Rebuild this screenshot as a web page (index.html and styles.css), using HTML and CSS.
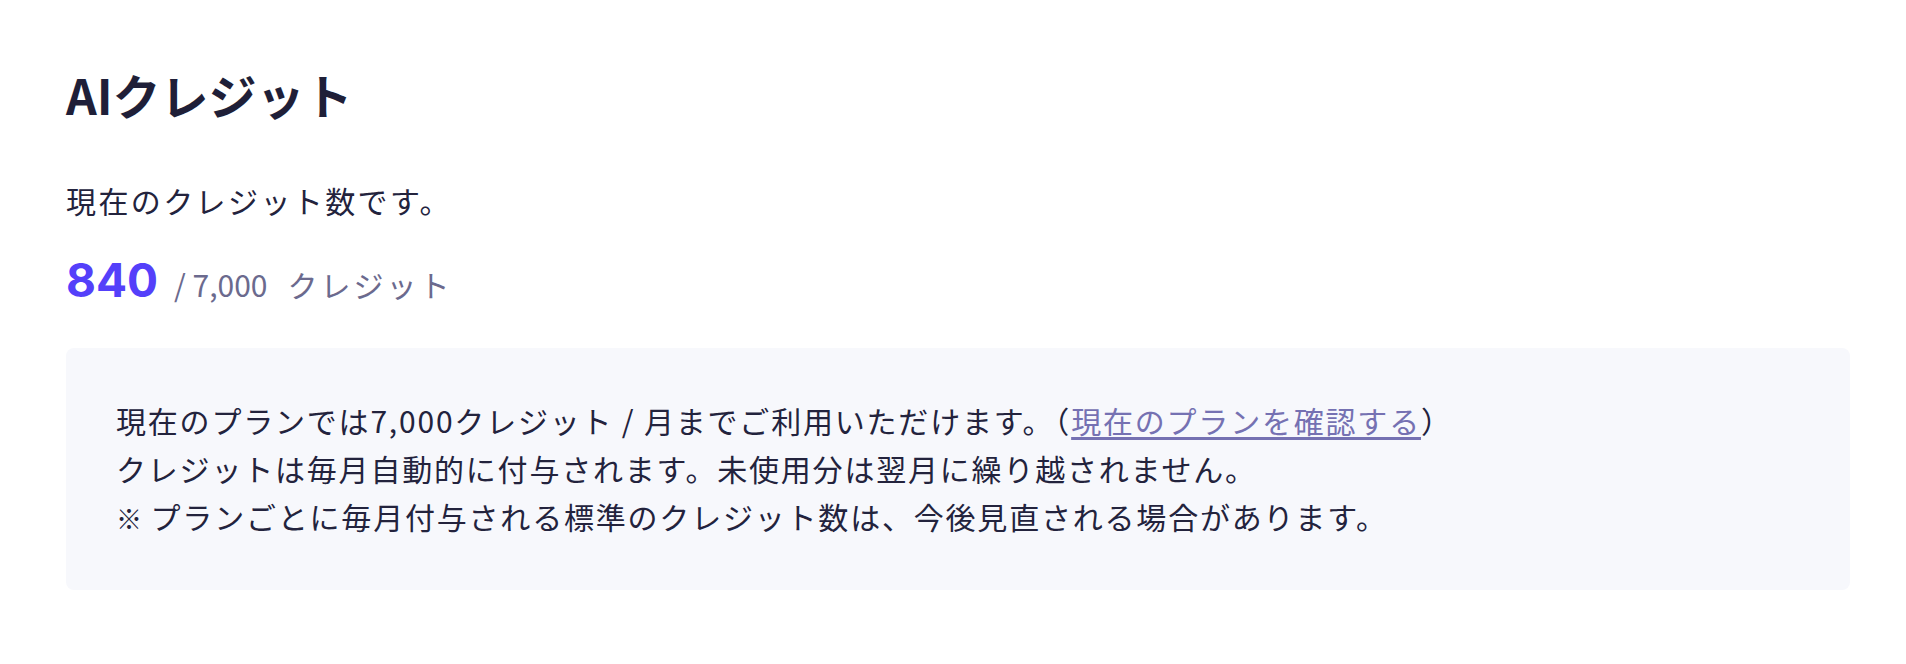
FILE: index.html
```
<html>
    <head>
        <meta charset="utf-8">
        <title>AIクレジット</title>
        <link rel="stylesheet" href="styles.css">
    </head>
    <body>
        <div class="page">
            <h1 class="title">AIクレジット</h1>
            <p class="lead">現在のクレジット数です。</p>
            <div class="credits">
                <span class="credits-now">840</span>
                <span class="credits-max">/ 7,000</span>
                <span class="credits-unit">クレジット</span>
            </div>
            <div class="note">
                現在のプランでは7,000クレジット / 月までご利用いただけます。（<a href="#" class="note-link">現在のプランを確認する</a>）<br>
                クレジットは毎月自動的に付与されます。未使用分は翌月に繰り越されません。<br>
                <b class="mark">※</b> プランごとに毎月付与される標準のクレジット数は、今後見直される場合があります。
            </div>
        </div>
    </body>
</html>
```

FILE: styles.css
```
body {
    margin: 0;
    background: #fff;
    color: #23233d;
    font-family: "Noto Sans CJK JP", "Noto Sans", sans-serif;
}
.page {
    padding: 62px 56px 0 66px;
}
.title {
    margin: 0;
    font-size: 48px;
    line-height: 64px;
    font-weight: 700;
    color: #1f1f38;
}
.lead {
    margin: 52px 0 0;
    font-size: 30px;
    line-height: 44px;
    letter-spacing: 0.08em;
}
.credits {
    display: flex;
    align-items: baseline;
    margin-top: 30px;
    color: #6b6a8e;
    font-size: 30px;
}
.credits-now {
    font-family: "Inter", "Noto Sans", sans-serif;
    font-size: 46px;
    font-weight: 700;
    color: #5440fa;
    margin-right: 16px;
}
.credits-max {
    margin-right: 20px;
}
.credits-unit {
    letter-spacing: 0.1em;
}
.note {
    margin-top: 40px;
    padding: 48px 50px;
    background: #f7f8fc;
    border-radius: 8px;
    font-size: 30px;
    line-height: 48px;
    letter-spacing: 0.06em;
}
.mark {
    font-size: 26px;
    letter-spacing: 0;
}
.note-link {
    color: #7571b2;
    text-decoration: underline;
    text-underline-offset: 4px;
}
```
